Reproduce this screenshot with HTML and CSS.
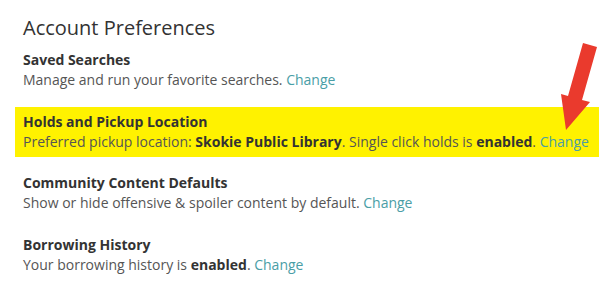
FILE: index.html
```html
<!DOCTYPE html>
<html lang="en">
<head>
    <meta charset="UTF-8">
    <meta name="viewport" content="width=device-width, initial-scale=1.0">
    <title>Account Preferences</title>
    <link rel="stylesheet" href="styles.css">
</head>
<body>
    <div class="prefs">
        <h1 class="prefs-title">Account Preferences</h1>

        <div class="pref">
            <div class="pref-name">Saved Searches</div>
            <div class="pref-desc">Manage and run your favorite searches. <a href="#" class="change">Change</a></div>
        </div>

        <div class="pref highlight">
            <div class="pref-name">Holds and Pickup Location</div>
            <div class="pref-desc">Preferred pickup location: <b>Skokie Public Library</b>. Single click holds is <b>enabled</b>. <a href="#" class="change">Change</a></div>
        </div>

        <div class="pref">
            <div class="pref-name">Community Content Defaults</div>
            <div class="pref-desc">Show or hide offensive &amp; spoiler content by default. <a href="#" class="change">Change</a></div>
        </div>

        <div class="pref">
            <div class="pref-name">Borrowing History</div>
            <div class="pref-desc">Your borrowing history is <b>enabled</b>. <a href="#" class="change">Change</a></div>
        </div>
    </div>

    <!-- red pointer arrow drawn over the page -->
    <svg class="arrow" width="611" height="297" viewBox="0 0 611 297">
        <polygon points="583,43 597,47 582,100 590,102 566,130 561,94 568,96" fill="#ea3a2d"/>
    </svg>
</body>
</html>
```

FILE: styles.css
```css
body {
    margin: 0;
    padding: 0;
    background: #fff;
    font-family: "Open Sans", Arial, sans-serif;
    color: #555;
}

.prefs {
    padding: 14px 12px 0 15px;
}

.prefs-title {
    margin: 0 0 3px 8px;
    font-size: 20px;
    line-height: 28px;
    font-weight: 400;
    color: #333;
}

.pref {
    padding: 5px 8px;
    margin-bottom: 11.5px;
    font-size: 14px;
    line-height: 20px;
}

.pref-name {
    font-weight: 700;
    color: #333;
}

.pref-desc b {
    color: #333;
}

.highlight {
    background: #fff200;
}

.change {
    color: #4a9ea6;
    text-decoration: none;
}

.arrow {
    position: absolute;
    top: 0;
    left: 0;
    pointer-events: none;
}
```
